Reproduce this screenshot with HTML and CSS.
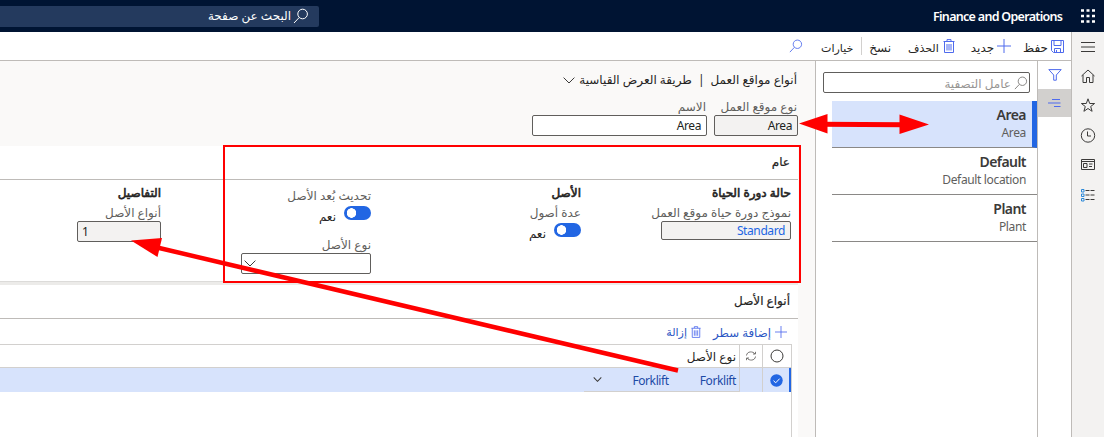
FILE: index.html
```html
<!DOCTYPE html>
<html lang="ar" dir="rtl">
<head>
<meta charset="utf-8">
<title>Finance and Operations</title>
<link rel="stylesheet" href="styles.css">
</head>
<body>
<svg width="0" height="0" class="defs">
  <symbol id="search" viewBox="0 0 16 16"><circle cx="9.6" cy="6" r="4.8"/><path d="M6.2 9.5 1 15"/></symbol>
  <symbol id="trash" viewBox="0 0 12 14"><path d="M.5 2.500h11M4 2.300V.6h4v1.700M1.500 2.500v11h9v-11M4 5v6.500M6 5v6.500M8 5v6.500"/></symbol>
  <symbol id="plus" viewBox="0 0 14 14"><path d="M7 0v14M0 7h14"/></symbol>
  <symbol id="chev" viewBox="0 0 12 7"><path d="M.6.6 6 6 11.400.6"/></symbol>
</svg>
<header class="top">
  <svg class="waffle" width="14" height="14" viewBox="0 0 14 14"><path d="M0 1.500h14M0 7h14M0 12.500h14"/></svg>
  <div class="brand" dir="ltr">Finance and Operations</div>
  <div class="top-search"><svg class="ic" width="16" height="16"><use href="#search"/></svg><span>البحث عن صفحة</span></div>
</header>
<div class="body">
  <nav class="rail">
    <svg width="16" height="16" viewBox="0 0 16 16"><path d="M1 3.500h14M1 8h14M1 12.500h14"/></svg>
    <svg width="16" height="16" viewBox="0 0 16 16"><path d="M1.500 7 8 1l6.500 6M3 6v7.500h3.500V8.500h3v5H13V6"/></svg>
    <svg width="16" height="16" viewBox="0 0 16 16"><path d="m8 .8 1.700 4.700h4.900l-3.900 3 1.400 4.800L8 10.500l-4.100 2.800 1.400-4.800-3.900-3h4.900z"/></svg>
    <svg width="16" height="16" viewBox="0 0 16 16"><circle cx="8" cy="7.500" r="6.700"/><path d="M7.500 3.500V8H11"/></svg>
    <svg width="16" height="16" viewBox="0 0 16 16"><path d="M1.500 2.500h13v10h-13zM1.500 4.500h13M3.500 6.500h3.500v4H3.500zM9 7h3.500M9 9.500h3"/></svg>
    <svg width="16" height="16" viewBox="0 0 16 16"><path d="M5.500 3.500h9M5.500 8h9M5.500 12.500h9" stroke-dasharray="4 1"/><path class="bl" d="M1.500 2.500h2.500v2.500h-2.500zM1.500 7h2.500v2.500h-2.500zM1.500 11.500h2.500v2.500h-2.500z"/></svg>
  </nav>
  <div class="work">
    <div class="toolbar">
      <div class="act save"><svg class="ic" width="13" height="13" viewBox="0 0 13 13"><path d="M.5.5h12v12h-10l-2-2zM3 .5v5h7v-5M3.500 12.500v-4h6v4M5.500 10v2"/></svg><span>حفظ</span></div>
      <div class="act new"><svg class="ic" width="14" height="14"><use href="#plus"/></svg><span>جديد</span></div>
      <div class="act del"><svg class="ic" width="12" height="14"><use href="#trash"/></svg><span>الحذف</span></div>
      <div class="act copy"><span>نسخ</span></div>
      <i class="sep"></i>
      <div class="act opts"><span>خيارات</span></div>
      <svg class="ic find" width="14" height="14"><use href="#search"/></svg>
    </div>
    <div class="panes">
      <aside class="tabs">
        <div class="tab"><svg class="ic" width="14" height="12" viewBox="0 0 14 12"><path d="M.8.6h12.400L8.300 6v5.200H5.700V6z"/></svg></div>
        <div class="tab on"><svg class="ic" width="13" height="8" viewBox="0 0 13 8"><path d="M4 .5h8M0 4h12.500M6 7.500h6.500"/></svg></div>
      </aside>
      <aside class="list">
        <div class="filter"><svg class="ic" width="14" height="14"><use href="#search"/></svg><span>عامل التصفية</span></div>
        <div class="item sel"><b>Area</b><span>Area</span></div>
        <div class="item"><b>Default</b><span>Default location</span></div>
        <div class="item"><b>Plant</b><span>Plant</span></div>
      </aside>
      <main class="main">
        <div class="crumb"><span class="c1">أنواع مواقع العمل</span><i>|</i><span class="c2">طريقة العرض القياسية</span><svg class="ic" width="12" height="7"><use href="#chev"/></svg></div>
        <div class="keys">
          <div class="field"><label>نوع موقع العمل</label><div class="box ro w84" dir="ltr">Area</div></div>
          <div class="field"><label class="nm">الاسم</label><div class="box w175" dir="ltr">Area</div></div>
        </div>
        <section class="card general">
          <h2>عام</h2>
          <div class="cols">
            <div class="col"><h3>حالة دورة الحياة</h3><label class="life">نموذج دورة حياة موقع العمل</label><div class="box ro link w130" dir="ltr">Standard</div></div>
            <div class="col"><h3>الأصل</h3><label>عدة أصول</label><div class="sw"><i></i><span>نعم</span></div></div>
            <div class="col c3"><label>تحديث بُعد الأصل</label><div class="sw"><i></i><span>نعم</span></div><label class="type">نوع الأصل</label><div class="box combo w130"><svg class="ic" width="12" height="7"><use href="#chev"/></svg></div></div>
            <div class="col"><h3>التفاصيل</h3><label>أنواع الأصل</label><div class="box ro num w84" dir="ltr">1</div></div>
          </div>
        </section>
        <section class="card lines">
          <h2>أنواع الأصل</h2>
          <div class="acts"><svg class="ic thin" width="12" height="12" viewBox="0 0 14 14"><use href="#plus"/></svg><span class="a1">إضافة سطر</span><svg class="ic" width="10" height="12"><use href="#trash"/></svg><span class="a2">إزالة</span></div>
          <div class="grid">
            <div class="row head">
              <div class="chk"><svg width="14" height="14" viewBox="0 0 14 14"><circle cx="7" cy="7" r="6"/></svg></div>
              <div class="ref"><svg width="12" height="10" viewBox="0 0 12 10"><path d="M1.500 4.500C2 0 8 0 10 3M10.500.8V3H8M10.500 5.500C10 10 4 10 2 7M1.500 9.200V7H4"/></svg></div>
              <div class="cell">نوع الأصل</div>
            </div>
            <div class="row cur">
              <div class="chk"><svg width="13" height="13" viewBox="0 0 13 13"><circle class="dot" cx="6.500" cy="6.500" r="6.200"/><path class="tick" d="m3.500 6.700 2.200 2.100 4-4.200"/></svg></div>
              <div class="ref"></div>
              <div class="cell under"><span dir="ltr">Forklift</span><span dir="ltr">Forklift</span><svg class="ic dn" width="9" height="5" viewBox="0 0 12 7"><use href="#chev"/></svg></div>
            </div>
          </div>
        </section>
      </main>
    </div>
  </div>
</div>
<svg class="notes" width="1104" height="437" viewBox="0 0 1104 437">
  <rect x="224" y="146" width="576" height="136"/>
  <path class="thick" d="M820 124.200 905 124.800"/>
  <path class="fill" d="M799 123.500 827.500 114v19.500zM929 124.500 899.500 114.500v19.500z"/>
  <path class="thick l" d="M678 370.500 155 247"/>
  <path class="fill" d="M131 240.500 162 238 157.500 257z"/>
</svg>
</body>
</html>
```

FILE: styles.css
```css
* { box-sizing: border-box; }
body { margin: 0; width: 1104px; height: 437px; overflow: hidden; background: #fff; color: #252423; font: 12px/16px "Noto Sans", "DejaVu Sans", sans-serif; }
span, label, .cell, .brand { white-space: nowrap; }
svg { flex: none; fill: none; stroke: #3b3a39; stroke-width: 1; }
i { font-style: normal; }
.defs { position: absolute; }
.defs symbol, .ic { stroke: inherit; }
.top { height: 32px; background: #001433; color: #fff; display: flex; align-items: center; padding-right: 9px; }
.waffle { stroke: #fff; stroke-width: 2.500; stroke-dasharray: 3 2.500; }
.brand { margin-right: 18px; width: 130px; font: 600 12.500px/20px "Noto Sans", sans-serif; letter-spacing: -.7px; padding-top: 2px; }
.top-search { margin-right: auto; width: 319px; height: 21px; background: #243a5e; border-radius: 0 2px 2px 0; display: flex; align-items: center; padding-right: 10px; gap: 2px; stroke: #fff; font-size: 12px; }
.body { display: flex; height: 405px; }
.rail { width: 32px; background: #f3f2f1; display: flex; flex-direction: column; align-items: center; gap: 13.500px; padding-top: 7px; }
.rail .bl { stroke: #2b88d8; }
.work { flex: 1; display: flex; flex-direction: column; border-right: 1px solid #bebbb8; }
.toolbar { height: 29px; border-bottom: 1px solid #bebbb8; display: flex; align-items: center; padding-right: 7px; stroke: #4f6bed; }
.act { display: flex; align-items: center; gap: 3px; }
.act span { padding-top: 3px; }
.new { margin-right: 12px; }
.del { margin-right: 16px; gap: 4px; font-size: 11px; }
.copy { margin-right: 17px; }
.sep { width: 1px; height: 18px; background: #d2d0ce; margin: 0 7px 0 8px; }
.opts { font-size: 11px; }
.find { margin-right: 18px; }
.panes { flex: 1; display: flex; }
.tabs { width: 33px; }
.tab { height: 28px; display: flex; align-items: center; justify-content: center; stroke: #4f6bed; }
.tab.on { background: #d2d0ce; }
.list { width: 223px; border: solid #bebbb8; border-width: 0 1px; padding-top: 11px; }
.filter { width: 207px; height: 21px; margin: 0 7px 8px 0; border: 1px solid #605e5c; border-radius: 2px; display: flex; align-items: center; padding-right: 1px; gap: 3px; color: #979593; stroke: #797775; font-size: 12px; }
.filter span { padding-top: 2px; }
.item { height: 47px; margin-left: 16px; border-bottom: 1px solid #8a8886; padding: 4px 11px 0 0; display: flex; flex-direction: column; color: #3b3a39; }
.item b { font: 600 14px/19px "Noto Sans", sans-serif; letter-spacing: -.55px; }
.item span { font-size: 12px; line-height: 17px; letter-spacing: -.35px; color: #605e5c; }
.item.sel { background: #d7e3fc; border-right: 5px solid #2266e3; padding-right: 6px; }
.main { flex: 1; background: #faf9f8; padding-right: 17px; }
.crumb { height: 38px; display: flex; align-items: center; padding-right: 1px; stroke: #3b3a39; }
.crumb i { margin: 0 6px; }
.crumb .ic { margin-right: 4px; }
.keys { display: flex; gap: 7px; height: 47px; }
label { display: block; color: #605e5c; line-height: 16px; height: 16px; }
.keys label { padding-right: 1px; }
.box { height: 21px; border: 1px solid #605e5c; border-radius: 2px; background: #fff; text-align: right; padding: 0 5px 0 4px; line-height: 20px; letter-spacing: -.4px; color: #201f1e; }
.ro { background: #f3f2f1; }
.w84 { width: 84px; }
.w175 { width: 175px; }
.w130 { width: 130px; }
.link { color: #2266e3; height: 19px; line-height: 18px; }
.num { text-align: left; }
.card { background: #fff; }
h2 { margin: 0; height: 34px; line-height: 32px; border-bottom: 1px solid #bebbb8; padding-right: 8px; font-size: 12px; font-weight: 500; -webkit-text-stroke: .2px; }
.general { height: 135px; box-shadow: 0 1px #dcdbd9, 0 4px #ecebe9; }
.cols { display: grid; grid-template-columns: 210px 210px 210px 1fr; padding: 5px 7px 0 0; }
h3 { margin: 0 0 4px; font-size: 12px; font-weight: 400; line-height: 16px; height: 16px; -webkit-text-stroke: .6px; }
.sw { display: flex; height: 18px; padding-top: 2px; gap: 8px; }
.sw i { width: 27px; height: 14px; border-radius: 7px; background: radial-gradient(circle at 7.500px 7px, #fff 4.500px, #2266e3 5px); }
.sw span { margin-top: 3px; }
.c3 { padding-top: 3px; }
.type { margin-top: 15px; }
.combo { display: flex; align-items: center; justify-content: flex-end; padding: 0 0 0 2px; stroke: #3b3a39; }
.lines { margin-top: 4px; height: 152px; }
.acts { height: 25px; display: flex; align-items: center; padding-right: 11px; color: #2b56c4; stroke: #4f6bed; font-size: 11.800px; }
.a1 { margin: 0 4px 0 12px; }
.a2 { margin-right: 4px; font-size: 11px; }
.grid { margin-right: 6px; height: 93px; border: 1px solid #d2d0ce; border-left: 0; border-bottom: 0; }
.row { display: flex; height: 23px; border-bottom: 1px solid #d2d0ce; }
.chk { width: 29px; border-left: 1px solid #d2d0ce; display: flex; align-items: center; justify-content: center; }
.ref { width: 23px; border-left: 1px solid #d2d0ce; display: flex; align-items: center; justify-content: center; }
.ref svg { stroke: #797775; }
.cell { padding-right: 3px; line-height: 23px; }
.cur { background: #d7e3fc; height: 24px; border-right: 2px solid #2266e3; border-bottom: 0; color: #1c4aa6; }
.cur .chk { width: 27px; }
.under { width: 155px; border-bottom: 1px solid #d2d0ce; display: flex; align-items: center; letter-spacing: -.4px; }
.under span { padding-top: 1px; }
.under span + span { margin-right: 31px; }
.dn { margin-right: 30px; stroke: #3b3a39; stroke-width: 1.500; }
.dot { fill: #2266e3; stroke: none; }
.tick { stroke: #fff; }
.notes { position: absolute; left: 0; top: 0; stroke: #f00; stroke-width: 2; }
.thick { stroke-width: 5; }
.l { stroke-width: 4.500; }
.fill { fill: #f00; stroke: none; }
```
